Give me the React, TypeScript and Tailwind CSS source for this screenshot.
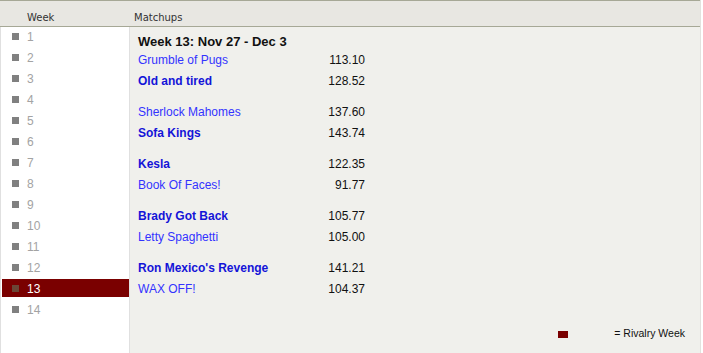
const weeks = Array.from({ length: 14 }, (_, i) => i + 1);
const selectedWeek = 13;

interface Team {
  name: string;
  score: string;
  winner: boolean;
}

const matchups: Team[][] = [
  [
    { name: 'Grumble of Pugs', score: '113.10', winner: false },
    { name: 'Old and tired', score: '128.52', winner: true },
  ],
  [
    { name: 'Sherlock Mahomes', score: '137.60', winner: false },
    { name: 'Sofa Kings', score: '143.74', winner: true },
  ],
  [
    { name: 'Kesla', score: '122.35', winner: true },
    { name: 'Book Of Faces!', score: '91.77', winner: false },
  ],
  [
    { name: 'Brady Got Back', score: '105.77', winner: true },
    { name: 'Letty Spaghetti', score: '105.00', winner: false },
  ],
  [
    { name: "Ron Mexico's Revenge", score: '141.21', winner: true },
    { name: 'WAX OFF!', score: '104.37', winner: false },
  ],
];

function WeekRow({ week }: { week: number }) {
  const active = week === selectedWeek;
  return (
    <div
      className={`mb-[3px] flex h-[18px] items-center pl-[10px] leading-[18px] ${
        active ? 'bg-[#7a0000] text-white' : 'text-[#a3a3a3]'
      }`}
    >
      <span className={`h-[7px] w-[7px] ${active ? 'bg-[#6b4636]' : 'bg-[#808080]'}`} />
      <span className="ml-[8px] pt-px">{week}</span>
    </div>
  );
}

function TeamRow({ team }: { team: Team }) {
  return (
    <div className="flex h-[21px] w-[227px] items-center justify-between leading-[21px]">
      <span className={team.winner ? 'font-bold text-[#1414d8]' : 'text-[#3333ff]'}>{team.name}</span>
      <span className="text-[#111]">{team.score}</span>
    </div>
  );
}

export default function App() {
  return (
    <div className="h-[353px] w-[703px] bg-white font-['Liberation_Sans',Arial,sans-serif] text-[12px]">
      <div className="flex h-full w-[701px] flex-col border-r border-[#e2e2de]">
        <div className="flex h-[27px] shrink-0 items-end border-y border-[#a6a896] bg-[#e8e7e2] pb-[1px] font-['DejaVu_Sans',Verdana,sans-serif] text-[10px] leading-[14px] text-[#333]">
          <div className="w-[130px] pl-[27px]">Week</div>
          <div className="pl-[4px]">Matchups</div>
        </div>
        <div className="flex flex-1">
          <div className="w-[130px] shrink-0 border-r border-l border-[#e0e0e0] bg-white pl-px">
            {weeks.map((w) => (
              <WeekRow key={w} week={w} />
            ))}
          </div>
          <div className="flex flex-1 flex-col bg-[#f0f0ec] pt-[6px] pl-[8px]">
            <div className="h-[17px] text-[13px] leading-[18px] font-bold text-[#111]">Week 13: Nov 27 - Dec 3</div>
            {matchups.map((pair, i) => (
              <div key={i} className="mb-[10px]">
                {pair.map((t) => (
                  <TeamRow key={t.name} team={t} />
                ))}
              </div>
            ))}
            <div className="mt-auto mb-[11px] flex items-center justify-end pr-[15px]">
              <span className="h-[7px] w-[10px] bg-[#7a0000]" />
              <span className="ml-[46px] text-[10.5px] text-[#111]">= Rivalry Week</span>
            </div>
          </div>
        </div>
      </div>
    </div>
  );
}
